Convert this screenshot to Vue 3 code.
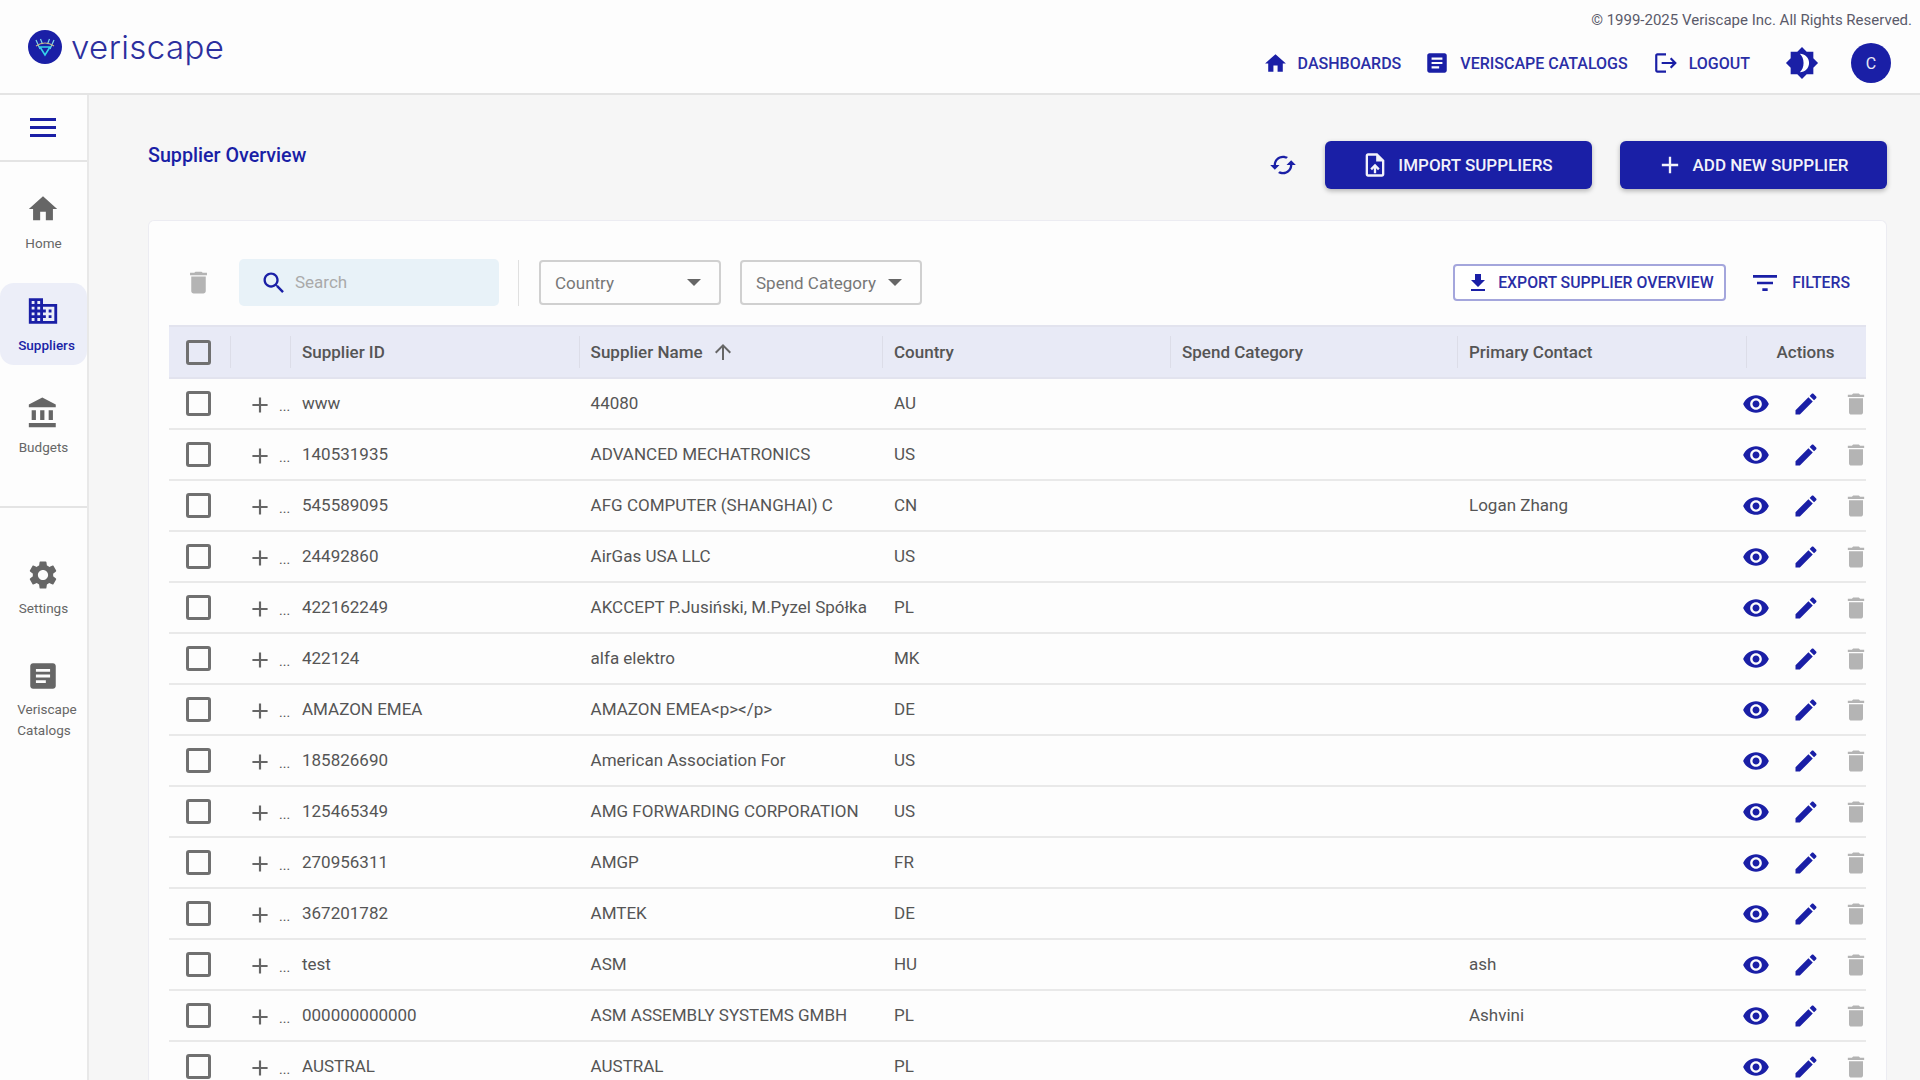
<script setup>
const icons = {
  home: 'M10 20v-6h4v6h5v-8h3L12 3 2 12h3v8z',
  doc: 'M19 3H5c-1.1 0-2 .9-2 2v14c0 1.1.9 2 2 2h14c1.1 0 2-.9 2-2V5c0-1.1-.9-2-2-2zm-5 14H7v-2h7v2zm3-4H7v-2h10v2zm0-4H7V7h10v2z',
  logout: 'M17 7l-1.41 1.41L18.17 11H8v2h10.17l-2.58 2.58L17 17l5-5zM4 5h8V3H4c-1.1 0-2 .9-2 2v14c0 1.1.9 2 2 2h8v-2H4V5z',
  cached: 'M19 8l-4 4h3c0 3.31-2.69 6-6 6-1.01 0-1.97-.25-2.8-.7l-1.46 1.46C8.97 19.54 10.43 20 12 20c4.42 0 8-3.58 8-8h3l-4-4zM6 12c0-3.31 2.69-6 6-6 1.01 0 1.97.25 2.8.7l1.46-1.46C15.03 4.46 13.57 4 12 4c-4.42 0-8 3.58-8 8H1l4 4 4-4H6z',
  upload: 'M14 2H6c-1.1 0-1.99.9-1.99 2L4 20c0 1.1.89 2 1.99 2H18c1.1 0 2-.9 2-2V8l-6-6zm4 18H6V4h7v5h5v11zM8 15.01l1.41 1.41L11 14.84V19h2v-4.16l1.59 1.59L16 15.01 12.01 11 8 15.01z',
  add: 'M19 13h-6v6h-2v-6H5v-2h6V5h2v6h6v2z',
  download: 'M19 9h-4V3H9v6H5l7 7 7-7zM5 18v2h14v-2H5z',
  filter: 'M10 18h4v-2h-4v2zM3 6v2h18V6H3zm3 7h12v-2H6v2z',
  search: 'M15.5 14h-.79l-.28-.27C15.41 12.59 16 11.11 16 9.5 16 5.91 13.09 3 9.5 3S3 5.91 3 9.5 5.91 16 9.5 16c1.61 0 3.09-.59 4.23-1.57l.27.28v.79l5 4.99L20.49 19l-4.99-5zm-6 0C7.01 14 5 11.99 5 9.5S7.01 5 9.5 5 14 7.01 14 9.5 11.99 14 9.5 14z',
  trash: 'M6 19c0 1.1.9 2 2 2h8c1.1 0 2-.9 2-2V7H6v12zM19 4h-3.5l-1-1h-5l-1 1H5v2h14V4z',
  eye: 'M12 4.5C7 4.5 2.73 7.61 1 12c1.73 4.39 6 7.5 11 7.5s9.27-3.11 11-7.5c-1.73-4.39-6-7.5-11-7.5zM12 17c-2.76 0-5-2.24-5-5s2.24-5 5-5 5 2.24 5 5-2.24 5-5 5zm0-8c-1.66 0-3 1.34-3 3s1.34 3 3 3 3-1.34 3-3-1.34-3-3-3z',
  edit: 'M3 17.25V21h3.75L17.81 9.94l-3.75-3.75L3 17.25zM20.71 7.04c.39-.39.39-1.02 0-1.41l-2.34-2.34c-.39-.39-1.02-.39-1.41 0l-1.83 1.83 3.75 3.75 1.83-1.83z',
  arrowUp: 'M4 12l1.41 1.41L11 7.83V20h2V7.83l5.58 5.59L20 12l-8-8-8 8z',
  domain: 'M12 7V3H2v18h20V7H12zM6 19H4v-2h2v2zm0-4H4v-2h2v2zm0-4H4V9h2v2zm0-4H4V5h2v2zm4 12H8v-2h2v2zm0-4H8v-2h2v2zm0-4H8V9h2v2zm0-4H8V5h2v2zm10 12h-8v-2h2v-2h-2v-2h2v-2h-2V9h8v10zm-2-8h-2v2h2v-2zm0 4h-2v2h2v-2z',
  bank: 'M4 10v7h3v-7H4zm6 0v7h3v-7h-3zM2 22h19v-3H2v3zm14-12v7h3v-7h-3zm-4.5-9L2 6v2h19V6l-9.5-5z',
  settings: 'M19.14 12.94c.04-.3.06-.61.06-.94 0-.32-.02-.64-.07-.94l2.03-1.58c.18-.14.23-.41.12-.61l-1.92-3.32c-.12-.22-.37-.29-.59-.22l-2.39.96c-.5-.38-1.03-.7-1.62-.94l-.36-2.54c-.04-.24-.24-.41-.48-.41h-3.84c-.24 0-.43.17-.47.41l-.36 2.54c-.59.24-1.13.57-1.62.94l-2.39-.96c-.22-.08-.47 0-.59.22L2.74 8.87c-.12.21-.08.47.12.61l2.03 1.58c-.05.3-.09.63-.09.94s.02.64.07.94l-2.03 1.58c-.18.14-.23.41-.12.61l1.92 3.32c.12.22.37.29.59.22l2.39-.96c.5.38 1.03.7 1.62.94l.36 2.54c.05.24.24.41.48.41h3.84c.24 0 .44-.17.47-.41l.36-2.54c.59-.24 1.13-.56 1.62-.94l2.39.96c.22.08.47 0 .59-.22l1.92-3.32c.12-.22.07-.47-.12-.61l-2.01-1.58zM12 15.6c-1.98 0-3.6-1.62-3.6-3.6s1.62-3.6 3.6-3.6 3.6 1.62 3.6 3.6-1.62 3.6-3.6 3.6z',
  star: 'M20 8.69V4h-4.69L12 .69 8.69 4H4v4.69L.69 12 4 15.31V20h4.69L12 23.31 15.31 20H20v-4.69L23.31 12 20 8.69z'
};

const navTop = [
  { label: 'Home', icon: 'home' },
  { label: 'Suppliers', icon: 'domain', active: true },
  { label: 'Budgets', icon: 'bank' }
];

const columns = ['Supplier ID', 'Supplier Name', 'Country', 'Spend Category', 'Primary Contact'];

const suppliers = [
  { id: 'www', name: '44080', country: 'AU', contact: '' },
  { id: '140531935', name: 'ADVANCED MECHATRONICS', country: 'US', contact: '' },
  { id: '545589095', name: 'AFG COMPUTER (SHANGHAI) C', country: 'CN', contact: 'Logan Zhang' },
  { id: '24492860', name: 'AirGas USA LLC', country: 'US', contact: '' },
  { id: '422162249', name: 'AKCCEPT P.Jusiński, M.Pyzel Spółka', country: 'PL', contact: '' },
  { id: '422124', name: 'alfa elektro', country: 'MK', contact: '' },
  { id: 'AMAZON EMEA', name: 'AMAZON EMEA<p></p>', country: 'DE', contact: '' },
  { id: '185826690', name: 'American Association For', country: 'US', contact: '' },
  { id: '125465349', name: 'AMG FORWARDING CORPORATION', country: 'US', contact: '' },
  { id: '270956311', name: 'AMGP', country: 'FR', contact: '' },
  { id: '367201782', name: 'AMTEK', country: 'DE', contact: '' },
  { id: 'test', name: 'ASM', country: 'HU', contact: 'ash' },
  { id: '000000000000', name: 'ASM ASSEMBLY SYSTEMS GMBH', country: 'PL', contact: 'Ashvini' },
  { id: 'AUSTRAL', name: 'AUSTRAL', country: 'PL', contact: '' }
];
</script>

<template>
  <div class="page">
    <header class="topbar">
      <div class="brand">
        <svg class="brand-mark" viewBox="0 0 34 34">
          <circle cx="17" cy="17" r="17" fill="#1a1fa6" />
          <path d="M8 10l4 9M26 10l-4 9M12.500 9l2 5M21.500 9l-2 5" stroke="#7fd8ea" stroke-width="1.2" fill="none" />
          <path d="M8 16q9-6 18 0" stroke="#c9b98a" stroke-width="1.1" fill="none" />
          <path d="M12 17h10l-5 8z" stroke="#35d3ea" stroke-width="1.6" fill="none" />
        </svg>
        <span class="brand-name">veriscape</span>
      </div>
      <div class="topbar-right">
        <div class="copyright">© 1999-2025 Veriscape Inc. All Rights Reserved.</div>
        <nav class="topnav">
          <a class="topnav-link">
            <svg class="ico-25" viewBox="0 0 24 24"><path :d="icons.home" /></svg>
            DASHBOARDS
          </a>
          <a class="topnav-link link-doc">
            <svg class="ico-26" viewBox="0 0 24 24"><path :d="icons.doc" /></svg>
            VERISCAPE CATALOGS
          </a>
          <a class="topnav-link link-logout">
            <svg class="ico-26" viewBox="0 0 24 24"><path :d="icons.logout" /></svg>
            LOGOUT
          </a>
          <svg class="theme-icon" viewBox="0 0 24 24">
            <path :d="icons.star" />
            <path d="M10.5 5.5c3.6 0 6.5 2.9 6.5 6.5s-2.9 6.5-6.5 6.5c1.7-1.6 2.6-3.9 2.6-6.5s-.9-4.9-2.6-6.5z" fill="#fff" />
          </svg>
          <div class="avatar">C</div>
        </nav>
      </div>
    </header>

    <div class="body">
      <aside class="sidebar">
        <div class="menu-block">
          <span class="burger"><i></i><i></i><i></i></span>
        </div>
        <div class="side-group side-main">
          <div v-for="item in navTop" :key="item.label" class="side-item" :class="{ active: item.active }">
            <svg class="side-icon" viewBox="0 0 24 24"><path :d="icons[item.icon]" /></svg>
            <span class="side-label">{{ item.label }}</span>
          </div>
        </div>
        <div class="side-group side-lower">
          <div class="side-item">
            <svg class="side-icon" viewBox="0 0 24 24"><path :d="icons.settings" /></svg>
            <span class="side-label">Settings</span>
          </div>
          <div class="side-item">
            <svg class="side-icon" viewBox="0 0 24 24"><path :d="icons.doc" /></svg>
            <span class="side-label multi">Veriscape<br />Catalogs</span>
          </div>
        </div>
      </aside>

      <main class="content">
        <div class="title-row">
          <h1 class="title">Supplier Overview</h1>
          <div class="title-actions">
            <svg class="sync-icon" viewBox="0 0 24 24"><path :d="icons.cached" /></svg>
            <button class="primary-btn">
              <svg viewBox="0 0 24 24"><path :d="icons.upload" /></svg>
              IMPORT SUPPLIERS
            </button>
            <button class="primary-btn">
              <svg viewBox="0 0 24 24"><path :d="icons.add" /></svg>
              ADD NEW SUPPLIER
            </button>
          </div>
        </div>

        <section class="card">
          <div class="toolbar">
            <svg class="toolbar-trash" viewBox="0 0 24 24"><path :d="icons.trash" /></svg>
            <div class="search">
              <svg viewBox="0 0 24 24"><path :d="icons.search" /></svg>
              <span>Search</span>
            </div>
            <div class="toolbar-sep"></div>
            <div class="select select-country">Country<i class="caret"></i></div>
            <div class="select select-spend">Spend Category<i class="caret"></i></div>
            <div class="toolbar-right">
              <button class="export-btn">
                <svg viewBox="0 0 24 24"><path :d="icons.download" /></svg>
                EXPORT SUPPLIER OVERVIEW
              </button>
              <div class="filters">
                <svg viewBox="0 0 24 24"><path :d="icons.filter" /></svg>
                FILTERS
              </div>
            </div>
          </div>

          <div class="table">
            <div class="row head">
              <div class="cell cell-check"><span class="checkbox"></span></div>
              <div class="cell sep"></div>
              <div v-for="col in columns" :key="col" class="cell sep">
                {{ col }}
                <svg v-if="col === 'Supplier Name'" class="sort-icon" viewBox="0 0 24 24"><path :d="icons.arrowUp" /></svg>
              </div>
              <div class="cell sep cell-actions-head">Actions</div>
            </div>
            <div v-for="s in suppliers" :key="s.id" class="row">
              <div class="cell cell-check"><span class="checkbox"></span></div>
              <div class="cell cell-expand">
                <svg class="plus" viewBox="0 0 24 24"><path :d="icons.add" /></svg>
                <span class="dots">...</span>
              </div>
              <div class="cell cell-text">{{ s.id }}</div>
              <div class="cell cell-text">{{ s.name }}</div>
              <div class="cell cell-text">{{ s.country }}</div>
              <div class="cell cell-text"></div>
              <div class="cell cell-text">{{ s.contact }}</div>
              <div class="cell cell-actions">
                <svg class="act act-eye" viewBox="0 0 24 24"><path :d="icons.eye" /></svg>
                <svg class="act act-edit" viewBox="0 0 24 24"><path :d="icons.edit" /></svg>
                <svg class="act act-trash" viewBox="0 0 24 24"><path :d="icons.trash" /></svg>
              </div>
            </div>
          </div>
        </section>
      </main>
    </div>
  </div>
</template>

<style>
html,
body {
  margin: 0;
  overflow: hidden;
}
</style>

<style scoped>
.page {
  --blue: #1a1fa6;
  height: 1080px;
  overflow: hidden;
  display: flex;
  flex-direction: column;
  background: #f6f6f6;
  font-family: Roboto, 'Liberation Sans', sans-serif;
  color: #555;
}

svg {
  fill: currentColor;
  flex: none;
  display: block;
}

.topbar {
  height: 95px;
  box-sizing: border-box;
  flex: none;
  display: flex;
  justify-content: space-between;
  background: #fdfdfd;
  border-bottom: 2px solid #e4e4e4;
}

.brand {
  display: flex;
  align-items: center;
  gap: 9px;
  padding: 1px 0 0 28px;
}

.brand-mark {
  width: 34px;
  height: 34px;
}

.brand-name {
  font-family: Inter, sans-serif;
  font-weight: 300;
  font-size: 33px;
  letter-spacing: 0.4px;
  color: #2c2f9e;
}

.topbar-right {
  display: flex;
  flex-direction: column;
  align-items: flex-end;
  padding: 11px 8px 0 0;
}

.copyright {
  font-size: 15px;
  line-height: 18px;
  color: #5a5a6a;
}

.topnav {
  display: flex;
  align-items: center;
  margin-top: 14px;
  padding-right: 21px;
  color: #2a2ea6;
}

.topnav-link {
  display: flex;
  align-items: center;
  gap: 10px;
  font-size: 16px;
  font-weight: 500;
}

.ico-25 {
  width: 25px;
  height: 25px;
  color: var(--blue);
}

.ico-26 {
  width: 26px;
  height: 26px;
  color: var(--blue);
}

.link-doc {
  margin-left: 23px;
}

.link-logout {
  margin-left: 25px;
}

.theme-icon {
  width: 34px;
  height: 34px;
  margin-left: 35px;
  color: var(--blue);
}

.avatar {
  width: 40px;
  height: 40px;
  margin-left: 32px;
  border-radius: 50%;
  background: var(--blue);
  color: #e8e8f5;
  font-size: 16px;
  display: flex;
  align-items: center;
  justify-content: center;
}

.body {
  flex: 1;
  display: flex;
  min-height: 0;
}

.sidebar {
  width: 89px;
  box-sizing: border-box;
  flex: none;
  background: #fdfdfd;
  border-right: 2px solid #e8e8e8;
  color: #666;
}

.menu-block {
  height: 65px;
  display: flex;
  align-items: center;
  justify-content: center;
  border-bottom: 2px solid #e4e4e4;
}

.burger {
  width: 26px;
  display: flex;
  flex-direction: column;
  gap: 5px;
  margin-right: 1px;
}

.burger i {
  height: 3px;
  background: var(--blue);
}

.side-group {
  display: flex;
  flex-direction: column;
}

.side-main {
  height: 346px;
  padding-top: 19px;
  gap: 20px;
  box-sizing: border-box;
  border-bottom: 2px solid #e4e4e4;
}

.side-lower {
  padding-top: 38px;
  gap: 19px;
}

.side-item {
  height: 82px;
  box-sizing: border-box;
  padding-top: 11px;
  display: flex;
  flex-direction: column;
  align-items: center;
  gap: 7px;
  border-radius: 14px;
}

.side-lower .side-item {
  padding-top: 12px;
  gap: 6px;
}

.side-icon {
  width: 34px;
  height: 34px;
  margin-right: 1px;
}

.side-label {
  font-size: 13.5px;
  line-height: 21px;
}

.side-label.multi {
  margin-left: 7px;
}

.side-item.active {
  background: #eceef8;
  color: var(--blue);
}

.side-item.active .side-label {
  font-weight: 500;
  margin-left: 6px;
}

.content {
  flex: 1;
  min-width: 0;
  padding: 46px 33px 0 59px;
}

.title-row {
  display: flex;
  justify-content: space-between;
  align-items: flex-start;
  margin-bottom: 31px;
}

.title {
  margin: 1px 0 0;
  font-size: 19.7px;
  line-height: 28px;
  font-weight: 500;
  color: var(--blue);
}

.title-actions {
  display: flex;
  align-items: center;
  gap: 28px;
}

.sync-icon {
  width: 28px;
  height: 28px;
  color: var(--blue);
}

.primary-btn {
  width: 267px;
  height: 48px;
  display: flex;
  align-items: center;
  justify-content: center;
  gap: 9px;
  padding: 0 3px 0 0;
  border: none;
  border-radius: 6px;
  background: var(--blue);
  color: #f2f2fa;
  font-family: inherit;
  font-size: 17px;
  font-weight: 500;
  box-shadow: 0 2px 5px rgba(0, 0, 0, 0.28);
}

.primary-btn svg {
  width: 28px;
  height: 28px;
}

.card {
  background: #fdfdfd;
  border: 1px solid #ececf2;
  border-bottom: none;
  border-radius: 6px 6px 0 0;
  padding: 38px 20px 0;
}

.toolbar {
  height: 47px;
  display: flex;
  align-items: center;
  margin-bottom: 19px;
}

.toolbar-trash {
  width: 29px;
  height: 29px;
  margin-left: 15px;
  color: #b4b4b4;
}

.search {
  width: 260px;
  height: 47px;
  margin-left: 26px;
  padding-left: 21px;
  box-sizing: border-box;
  display: flex;
  align-items: center;
  gap: 7px;
  border-radius: 5px;
  background: #e8f2f8;
  font-size: 17px;
  color: #aaa;
}

.search span {
  margin-top: -1px;
}

.search svg {
  width: 28px;
  height: 28px;
  color: var(--blue);
}

.toolbar-sep {
  width: 1px;
  height: 46px;
  margin-left: 19px;
  background: #e0e0e0;
}

.select {
  height: 45px;
  width: 182px;
  box-sizing: border-box;
  display: flex;
  align-items: center;
  justify-content: space-between;
  padding: 0 18px 0 14px;
  border: 2px solid #d0d0d0;
  border-radius: 4px;
  font-size: 17px;
  color: #777;
}

.select-country {
  margin-left: 20px;
}

.select-spend {
  margin-left: 19px;
}

.caret {
  width: 0;
  height: 0;
  border-left: 7px solid transparent;
  border-right: 7px solid transparent;
  border-top: 7px solid #666;
}

.toolbar-right {
  margin-left: auto;
  display: flex;
  align-items: center;
  padding-right: 16px;
}

.export-btn {
  width: 273px;
  height: 37px;
  display: flex;
  align-items: center;
  gap: 8px;
  padding: 0 0 0 11px;
  border: 2px solid #a4a6dc;
  border-radius: 4px;
  background: #fff;
  color: #2a2ea6;
  font-family: inherit;
  font-size: 15.8px;
  font-weight: 500;
}

.export-btn svg {
  width: 24px;
  height: 24px;
  color: var(--blue);
}

.filters {
  display: flex;
  align-items: center;
  gap: 11px;
  margin-left: 23px;
  color: #2a2ea6;
  font-size: 15.8px;
  font-weight: 500;
}

.filters svg {
  width: 32px;
  height: 32px;
  color: var(--blue);
}

.row {
  height: 51px;
  box-sizing: border-box;
  display: grid;
  grid-template-columns: 61px 60px 288.6px 303.4px 288px 287px 289px 120px;
  align-items: center;
  border-bottom: 2px solid #e9e9e9;
  font-size: 17px;
  color: #555;
}

.row.head {
  height: 54px;
  background: #e8eaf6;
  border-top: 2px solid #e2e3ee;
  border-bottom: 2px solid #e2e3ee;
  font-weight: 500;
}

.cell {
  padding-left: 12px;
  display: flex;
  align-items: center;
  min-width: 0;
  white-space: nowrap;
}

.cell-text {
  padding-bottom: 2px;
}

.cell.sep {
  height: 32px;
  border-left: 1px solid #dcdde8;
  padding-left: 11px;
}

.cell-check {
  padding-left: 17px;
}

.checkbox {
  width: 25px;
  height: 25px;
  box-sizing: border-box;
  border: 3px solid #707070;
  border-radius: 3px;
}

.sort-icon {
  width: 24px;
  height: 24px;
  margin-left: 8px;
  color: #666;
}

.cell.cell-actions-head {
  justify-content: center;
  padding: 0 2px 0 0;
}

.cell-expand {
  padding-left: 17px;
}

.plus {
  width: 26px;
  height: 26px;
  margin-top: 2px;
  color: #666;
}

.dots {
  font-size: 14px;
  margin: 5px 0 0 6px;
  color: #555;
}

.cell-actions {
  justify-content: flex-end;
  margin-right: -4px;
  gap: 22px;
  padding-left: 0;
}

.act {
  width: 28px;
  height: 28px;
}

.act-eye,
.act-edit {
  color: var(--blue);
}

.act-trash {
  color: #b4b4b4;
}
</style>
